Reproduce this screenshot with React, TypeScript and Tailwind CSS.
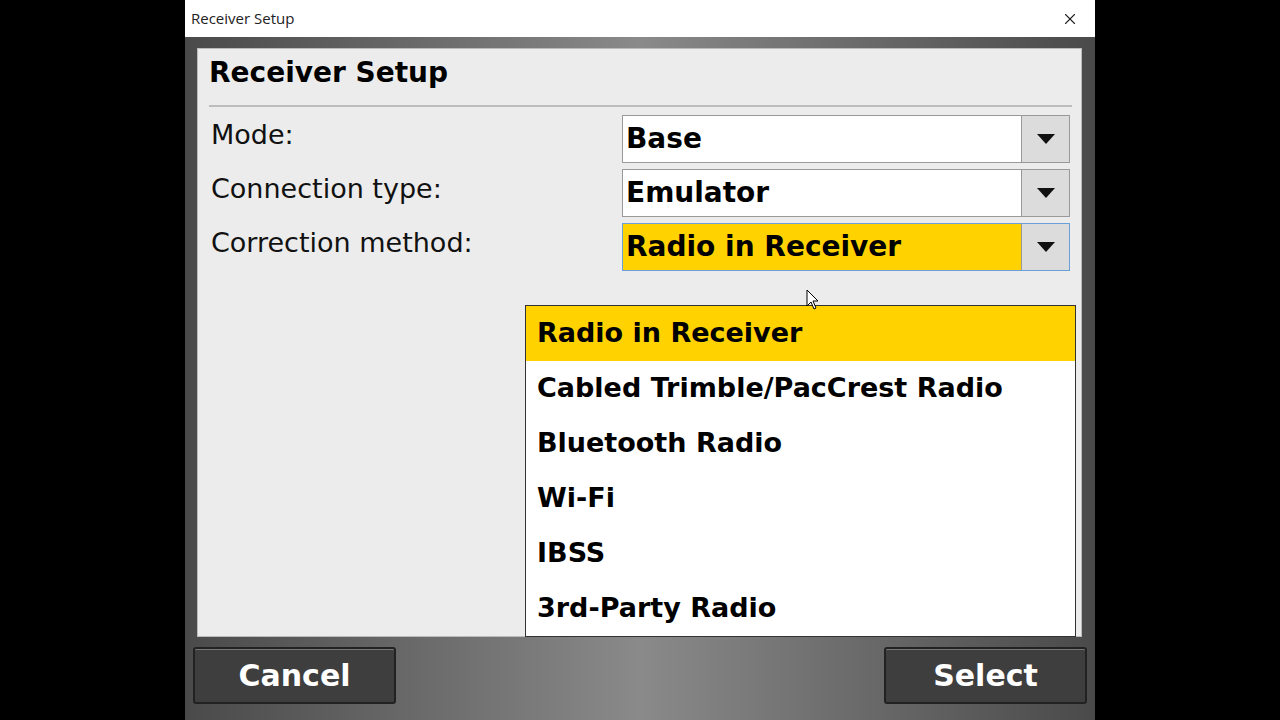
import { X } from "lucide-react";

const rows = [
  { label: "Mode:", value: "Base", active: false },
  { label: "Connection type:", value: "Emulator", active: false },
  { label: "Correction method:", value: "Radio in Receiver", active: true },
];

const options = [
  "Radio in Receiver",
  "Cabled Trimble/PacCrest Radio",
  "Bluetooth Radio",
  "Wi-Fi",
  "IBSS",
  "3rd-Party Radio",
];

const font = { fontFamily: '"DejaVu Sans", Verdana, sans-serif' };

const Arrow = () => (
  <div className="w-[48px] h-full bg-[#dcdcdc] border-l border-[#999] flex items-center justify-center">
    <svg width="18" height="10" viewBox="0 0 18 10">
      <path d="M0 0 L18 0 L9 10 Z" fill="#111" />
    </svg>
  </div>
);

export default function App() {
  return (
    <div className="w-[1280px] h-[720px] bg-black flex justify-center overflow-hidden" style={font}>
      <div className="w-[910px] ml-[-healthy] flex flex-col" style={{ marginLeft: 0 }}>
        {/* title bar */}
        <div className="h-[37px] bg-white flex items-center justify-between pl-[6px] pr-[16px] shrink-0">
          <span className="text-[15px] text-[#222]" style={{ fontFamily: '"Open Sans", sans-serif' }}>
            Receiver Setup
          </span>
          <X size={18} strokeWidth={1.5} className="text-[#222]" />
        </div>

        {/* body */}
        <div className="flex-1 bg-gradient-to-r from-[#4a4a4a] via-[#8a8a8a] to-[#4a4a4a] flex flex-col px-[12px] pt-[11px]">
          <div className="relative h-[589px] bg-[#ececec] mr-[1px] px-[11px] pt-[6px] border border-[#bbb]">
            <h1 className="text-[28px] font-bold text-black leading-[36px] pl-[0px]">Receiver Setup</h1>
            <div className="h-[2px] bg-[#bdbdbd] mt-[14px] mr-[-2px]" />
            <div className="flex flex-col gap-[6px] mt-[8px]">
              {rows.map((r) => (
                <div key={r.label} className="flex items-start justify-between pr-[0px]">
                  <span className="text-[27px] text-[#111] leading-[40px] pl-[2px]">{r.label}</span>
                  <div
                    className={`w-[448px] h-[48px] flex border ${
                      r.active ? "border-[#6aa0d8]" : "border-[#999]"
                    } bg-white`}
                  >
                    <div
                      className={`flex-1 flex items-center pl-[3px] text-[28px] font-bold text-black ${
                        r.active ? "bg-[#ffd200]" : "bg-white"
                      }`}
                    >
                      {r.value}
                    </div>
                    <Arrow />
                  </div>
                </div>
              ))}
            </div>

            {/* open dropdown list */}
            <div className="absolute left-[327px] top-[256px] w-[551px] h-[332px] bg-white border border-[#333] flex flex-col">
              {options.map((o, i) => (
                <div
                  key={o}
                  className={`h-[55px] flex items-center pl-[11px] text-[27px] font-bold text-black ${
                    i === 0 ? "bg-[#ffd200]" : ""
                  }`}
                >
                  {o}
                </div>
              ))}
            </div>

            {/* cursor */}
            <svg className="absolute left-[608px] top-[240px]" width="14" height="22" viewBox="0 0 14 22">
              <path d="M1 1 L1 17 L5 13 L8 20 L10 19 L7 12 L12 12 Z" fill="white" stroke="black" strokeWidth="1" />
            </svg>
          </div>

          {/* buttons */}
          <div className="flex justify-between mt-[10px] px-[-4px] ml-[-4px] mr-[-4px]">
            <button className="w-[203px] h-[57px] bg-[#3e3e3e] border-2 border-[#222] rounded-[3px] text-white text-[30px] font-bold shadow-[inset_0_1px_0_#777]">
              Cancel
            </button>
            <button className="w-[203px] h-[57px] bg-[#3e3e3e] border-2 border-[#222] rounded-[3px] text-white text-[30px] font-bold shadow-[inset_0_1px_0_#777]">
              Select
            </button>
          </div>
        </div>
      </div>
    </div>
  );
}
